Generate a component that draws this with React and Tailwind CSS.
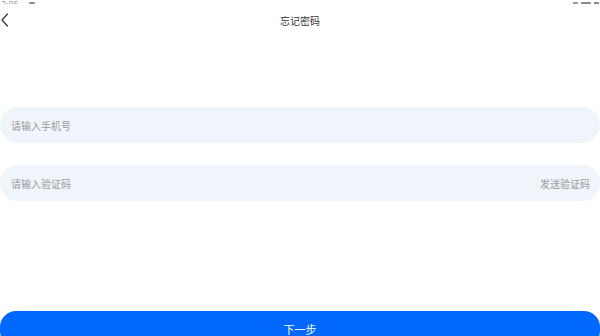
import React, { useState } from 'react';

const App = () => {
  const [phone, setPhone] = useState('');
  const [code, setCode] = useState('');

  return (
    <div
      className="w-[600px] h-[336px] overflow-hidden bg-white flex flex-col"
      style={{ fontFamily: '"Noto Sans CJK SC", "Noto Sans", sans-serif' }}
    >
      {/* Status bar (mostly scrolled off) */}
      <div className="h-[4px] shrink-0 overflow-hidden flex items-end justify-between px-[1px]">
        <div className="flex items-end gap-[10px] translate-y-[5px]">
          <span className="text-[9px] leading-[9px] text-[#9a9a9a]">2:05</span>
          <span className="w-[6px] h-[7px] bg-[#8a8a8a] rounded-[1px]" />
        </div>
        <div className="flex items-end gap-[3px] translate-y-[5px]">
          <span className="w-[5px] h-[7px] bg-[#9a9a9a]" />
          <span className="w-[10px] h-[7px] bg-[#8a8a8a] rounded-[1px]" />
          <span className="w-[5px] h-[7px] bg-[#8a8a8a]" />
        </div>
      </div>

      {/* Nav bar */}
      <div className="relative h-[32px] shrink-0 flex items-center justify-center">
        <button className="absolute left-0 top-1/2 -translate-y-1/2 pl-[1px]">
          <svg width="8" height="14" viewBox="0 0 8 14" fill="none">
            <path d="M6.5 1L1 7l5.5 6" stroke="#333" strokeWidth="1.2" strokeLinecap="round" strokeLinejoin="round" />
          </svg>
        </button>
        <h1 className="text-[10px] text-[#333] font-normal">忘记密码</h1>
      </div>

      {/* Form */}
      <div className="flex flex-col gap-[22px] mt-[71px] shrink-0">
        <div className="h-[36px] rounded-full bg-[#f0f5fc] flex items-center px-[11px]">
          <input
            type="tel"
            placeholder="请输入手机号"
            value={phone}
            onChange={(e) => setPhone(e.target.value)}
            className="flex-1 bg-transparent outline-none text-[10px] text-[#333] placeholder:text-[#999]"
          />
        </div>
        <div className="h-[36px] rounded-full bg-[#f0f5fc] flex items-center pl-[11px] pr-[10px]">
          <input
            type="text"
            placeholder="请输入验证码"
            value={code}
            onChange={(e) => setCode(e.target.value)}
            className="flex-1 bg-transparent outline-none text-[10px] text-[#333] placeholder:text-[#999]"
          />
          <button className="text-[10px] text-[#999]">发送验证码</button>
        </div>
      </div>

      {/* Next button */}
      <button className="mt-[110px] h-[36px] shrink-0 rounded-[16px] bg-[#0068ff] text-white text-[11px]">
        下一步
      </button>
    </div>
  );
};

export default App;
